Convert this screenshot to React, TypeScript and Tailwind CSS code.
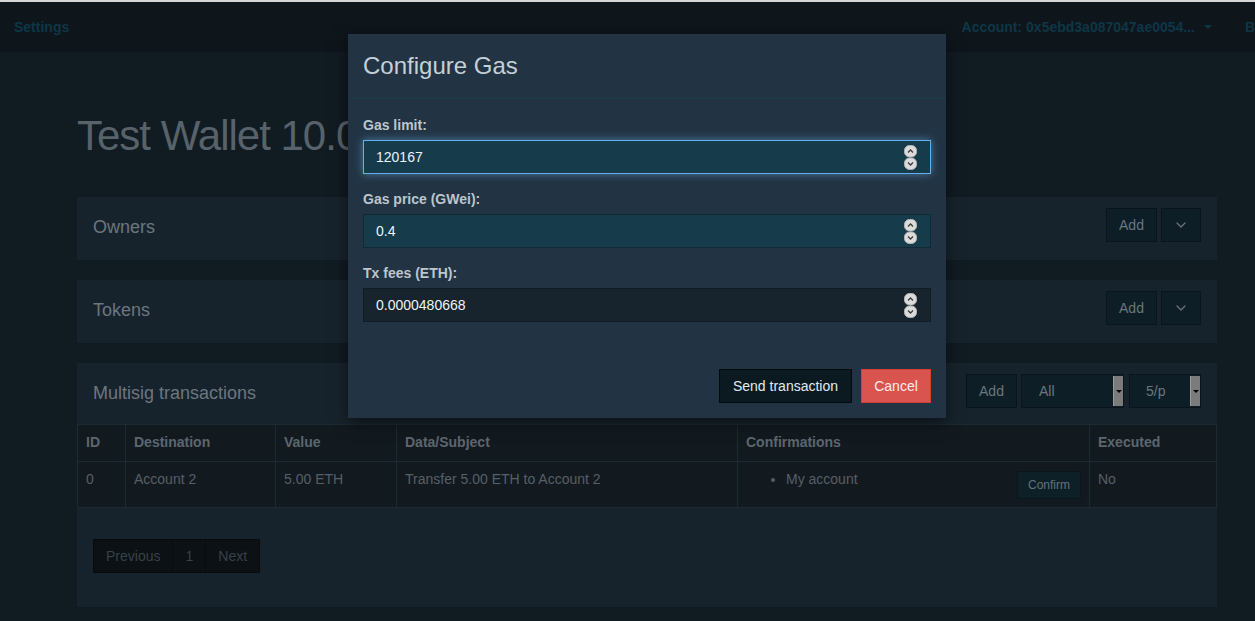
import React from 'react';
import { ChevronDown } from 'lucide-react';

const Spinner: React.FC = () => (
    <svg width="13" height="25" viewBox="0 0 13 25" className="shrink-0">
        <rect x="0.5" y="0.5" width="12" height="11.5" rx="5" fill="#dcdcdc" stroke="#b5b5b5" />
        <rect x="0.5" y="13" width="12" height="11.5" rx="5" fill="#dcdcdc" stroke="#b5b5b5" />
        <path d="M4 7.5 L6.5 5 L9 7.5" fill="none" stroke="#3a3a3a" strokeWidth="1.3" />
        <path d="M4 17.5 L6.5 20 L9 17.5" fill="none" stroke="#3a3a3a" strokeWidth="1.3" />
    </svg>
);

const GasField: React.FC<{ label: string; value: string; variant: 'focus' | 'teal' | 'dark' }> = ({ label, value, variant }) => {
    const box =
        variant === 'focus'
            ? 'bg-[#163b4a] border-[#66afe9] shadow-[0_0_8px_rgba(102,175,233,0.6)]'
            : variant === 'teal'
            ? 'bg-[#163b4a] border-[#102934]'
            : 'bg-[#17242d] border-[#111d25]';
    return (
        <div className="mb-[15px] last:mb-0">
            <div className="mb-[5px] text-[14px] font-bold leading-[20px] text-[#bcc6ce]">{label}</div>
            <div className={`flex h-[34px] items-center justify-between border pl-[12px] pr-[13px] ${box}`}>
                <span className="text-[14px] text-[#eef3f6]">{value}</span>
                <Spinner />
            </div>
        </div>
    );
};

const DarkButton: React.FC<{ children: React.ReactNode; className?: string }> = ({ children, className = '' }) => (
    <button className={`flex h-[34px] items-center justify-center border border-[#0a151b] bg-[#0e1e26] text-[14px] text-[#6b757c] ${className}`}>
        {children}
    </button>
);

const FakeSelect: React.FC<{ label: string; className: string; textPad: string }> = ({ label, className, textPad }) => (
    <div className={`flex h-[34px] items-stretch border border-[#0a151b] bg-[#0e1e26] ${className}`}>
        <span className={`flex flex-1 items-center text-[14px] text-[#6b757c] ${textPad}`}>{label}</span>
        <span className="my-[1px] flex w-[10px] items-center justify-center border-l border-[#9a9a9a] bg-[#7b7b7b]">
            <span className="h-0 w-0 border-x-[3px] border-t-[3px] border-x-transparent border-t-black" />
        </span>
    </div>
);

const PanelHeader: React.FC<{ title: string; children: React.ReactNode; height: string }> = ({ title, children, height }) => (
    <div className={`flex items-start justify-between px-[16px] pt-[11px] ${height}`}>
        <span className="mt-[9px] text-[18px] leading-[20px] text-[#6b7680]">{title}</span>
        <div className="flex gap-[4px]">{children}</div>
    </div>
);

const App: React.FC = () => {
    const th = 'border border-[#1c2a33] px-[8px] pt-[7px] pb-[9px] text-left font-bold leading-[20px] text-[#5d666d]';
    const td = 'border border-[#1c2a33] px-[8px] pt-[7px] pb-[8px] align-top leading-[20px] text-[#575f66]';

    return (
        <div className="relative h-[621px] w-[1255px] overflow-hidden bg-[#111b22] font-['Liberation_Sans',Arial,sans-serif] text-[14px]">
            <div className="h-[2px] bg-[#d7d7d7]" />
            <nav className="flex h-[50px] items-center overflow-hidden bg-[#0e151b] text-[14px] font-bold text-[#0d3747]">
                <span className="pl-[14px]">Settings</span>
                <div className="ml-auto flex items-center">
                    <span>Account: 0x5ebd3a087047ae0054...</span>
                    <span className="ml-[9px] h-0 w-0 border-x-[4px] border-t-[4px] border-x-transparent border-t-[#0d3747]" />
                    <span className="ml-[33px] w-[10px] overflow-hidden whitespace-nowrap">B</span>
                </div>
            </nav>

            <main className="ml-[77px] w-[1140px]">
                <h1 className="mt-[60px] mb-[37px] w-[272px] overflow-hidden text-[42px] leading-[48px] tracking-[-1px] whitespace-nowrap text-[#57626a]">
                    Test Wallet 10.0 ETH
                </h1>

                <section className="bg-[#17232c]">
                    <PanelHeader title="Owners" height="h-[63px]">
                        <DarkButton className="w-[51px]">Add</DarkButton>
                        <DarkButton className="w-[40px]">
                            <ChevronDown size={16} strokeWidth={1.8} color="#6b757c" />
                        </DarkButton>
                    </PanelHeader>
                </section>

                <section className="mt-[20px] bg-[#17232c]">
                    <PanelHeader title="Tokens" height="h-[63px]">
                        <DarkButton className="w-[51px]">Add</DarkButton>
                        <DarkButton className="w-[40px]">
                            <ChevronDown size={16} strokeWidth={1.8} color="#6b757c" />
                        </DarkButton>
                    </PanelHeader>
                </section>

                <section className="mt-[20px] h-[244px] bg-[#17232c]">
                    <div className="flex h-[61px] items-start justify-between px-[16px] pt-[11px]">
                        <span className="mt-[9px] text-[18px] leading-[20px] text-[#6b7680]">Multisig transactions</span>
                        <div className="flex gap-[4px]">
                            <DarkButton className="w-[51px]">Add</DarkButton>
                            <FakeSelect label="All" className="w-[103px]" textPad="pl-[17px]" />
                            <FakeSelect label="5/p" className="ml-[1px] w-[72px]" textPad="pl-[16px]" />
                        </div>
                    </div>
                    <table className="w-full table-fixed border-collapse bg-[#121a20] text-[14px]">
                        <thead>
                            <tr>
                                <th className={`${th} w-[48px]`}>ID</th>
                                <th className={`${th} w-[150px]`}>Destination</th>
                                <th className={`${th} w-[121px]`}>Value</th>
                                <th className={`${th} w-[341px]`}>Data/Subject</th>
                                <th className={`${th} w-[352px]`}>Confirmations</th>
                                <th className={th}>Executed</th>
                            </tr>
                        </thead>
                        <tbody>
                            <tr>
                                <td className={td}>0</td>
                                <td className={td}>Account 2</td>
                                <td className={td}>5.00 ETH</td>
                                <td className={td}>Transfer 5.00 ETH to Account 2</td>
                                <td className={td}>
                                    <div className="flex items-start justify-between">
                                        <ul className="list-disc pl-[40px] marker:text-[#575f66]">
                                            <li>My account</li>
                                        </ul>
                                        <button className="mt-[2px] h-[28px] border border-[#09161c] bg-[#0d2027] px-[10px] text-[12px] text-[#66727a]">
                                            Confirm
                                        </button>
                                    </div>
                                </td>
                                <td className={td}>No</td>
                            </tr>
                        </tbody>
                    </table>
                    <div className="mt-[31px] flex px-[16px]">
                        {['Previous', '1', 'Next'].map((p) => (
                            <span
                                key={p}
                                className="-ml-[1px] flex h-[34px] items-center border border-[#080c0f] bg-[#0b1115] px-[12px] text-[#394147] first:ml-0"
                            >
                                {p}
                            </span>
                        ))}
                    </div>
                </section>
            </main>

            {/* gas dialog */}
            <div className="absolute left-[348px] top-[34px] w-[598px] bg-[#223444] shadow-[0_5px_15px_rgba(0,0,0,0.5)]">
                <div className="flex h-[65px] items-center border-b border-[#1b3d4b] px-[15px]">
                    <h4 className="text-[24px] leading-[26px] text-[#c4d0d8]">Configure Gas</h4>
                </div>
                <div className="px-[15px] pt-[16px]">
                    <GasField label="Gas limit:" value="120167" variant="focus" />
                    <GasField label="Gas price (GWei):" value="0.4" variant="teal" />
                    <GasField label="Tx fees (ETH):" value="0.0000480668" variant="dark" />
                </div>
                <div className="mt-[47px] flex justify-end gap-[9px] px-[15px] pb-[15px]">
                    <button className="h-[34px] w-[133px] border border-[#04090c] bg-[#0a1a20] text-[14px] text-[#e1eaf0]">
                        Send transaction
                    </button>
                    <button className="h-[34px] w-[70px] border border-[#d43f3a] bg-[#d9534f] text-[14px] text-[#fbecec]">
                        Cancel
                    </button>
                </div>
            </div>
        </div>
    );
};

export default App;
